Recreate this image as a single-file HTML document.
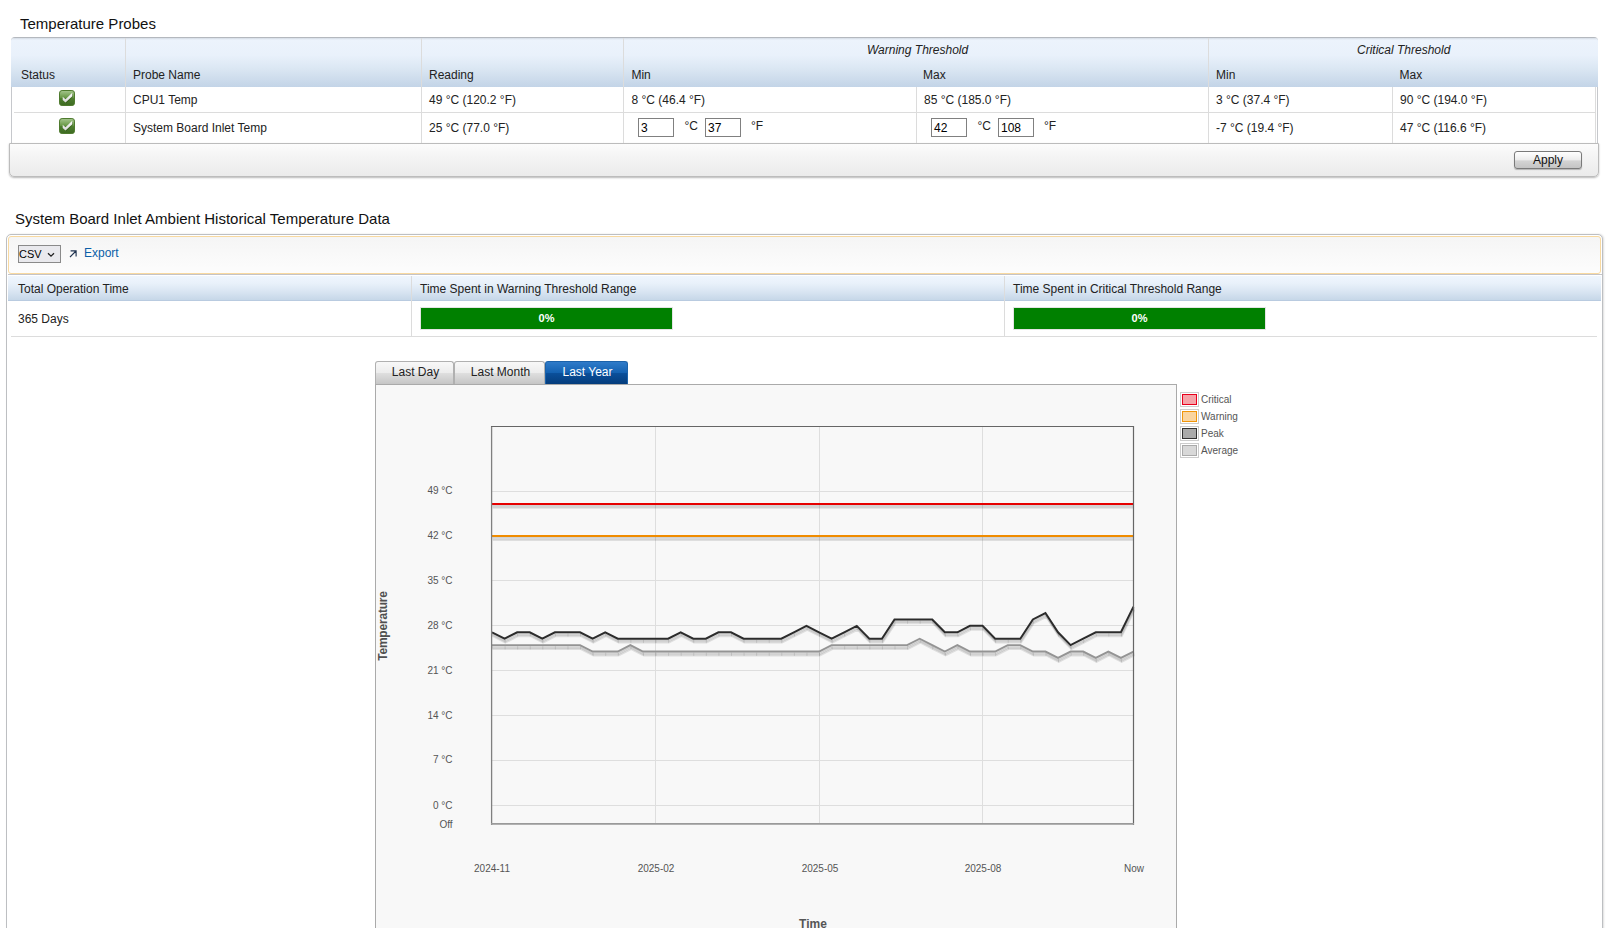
<!DOCTYPE html>
<html>
<head>
<meta charset="utf-8">
<title>Temperature Probes</title>
<style>
html,body{margin:0;padding:0;background:#fff;}
html{overflow:hidden;width:1614px;height:928px;}
body{width:1614px;height:928px;overflow:hidden;position:relative;font-family:"Liberation Sans",sans-serif;font-size:12px;color:#222;}
.abs{position:absolute;}
.t{position:absolute;white-space:nowrap;line-height:14px;font-size:12px;color:#222;}
.h1{position:absolute;white-space:nowrap;font-size:15px;line-height:18px;color:#111;}
.hdr{background:linear-gradient(#d4dbe4 0%,#ecf3fc 4%,#e9f1fb 35%,#dbe7f3 62%,#c3d4e7 100%);}
.vline{position:absolute;width:1px;background:#dcdcdc;}
.hline{position:absolute;height:1px;background:#dcdcdc;}
.inp{position:absolute;box-sizing:border-box;border:1px solid #808080;background:#fff;width:36px;height:19px;font-size:12px;line-height:17px;padding:1px 0 0 2px;color:#000;}
.chk{position:absolute;width:16px;height:16px;}
.tab{position:absolute;box-sizing:border-box;height:23px;top:361px;border:1px solid #b0b0b0;border-bottom:none;border-radius:3px 3px 0 0;background:linear-gradient(#f8f8f8 0%,#ececec 50%,#dedede 52%,#c6c6c6 100%);font-size:12px;line-height:21px;text-align:center;color:#222;padding-left:2px;}
.tab.sel{background:linear-gradient(#2f7bc9 0%,#1462b2 48%,#0a4f9a 52%,#053d7c 100%);border-color:#1b62aa;color:#fff;}
.yl{position:absolute;width:40px;text-align:right;left:412.6px;font-size:10px;line-height:12px;color:#555;white-space:nowrap;}
.xl{position:absolute;width:60px;text-align:center;font-size:10px;line-height:12px;color:#555;white-space:nowrap;top:863px;}
.lg{position:absolute;left:1201px;font-size:10px;line-height:12px;color:#555;white-space:nowrap;}
.sw{position:absolute;left:1180px;width:19px;height:15px;box-sizing:border-box;border:1px solid #ccc;padding:1px;background:#fff;}
.sw i{display:block;width:100%;height:100%;box-sizing:border-box;border:1px solid;}
</style>
</head>
<body>
<div id="p" style="position:absolute;left:0;top:0;width:1614px;height:928px;overflow:hidden;">

<!-- ===== Section 1 ===== -->
<div class="h1" style="left:20px;top:15px;">Temperature Probes</div>

<!-- table shell -->
<div class="abs" style="left:11px;top:37px;width:1587px;height:107px;border:1px solid #c6c8cc;border-top-color:#b4b8be;border-bottom:none;box-sizing:border-box;border-radius:4px 4px 0 0;background:#fff;"></div>
<div class="abs hdr" style="left:11px;top:38px;width:1587px;height:49px;border-radius:3px 3px 0 0;"></div>
<!-- footer bar -->
<div class="abs" style="left:9px;top:143px;width:1590px;height:34px;box-sizing:border-box;border:1px solid #bcbcbc;border-radius:0 0 5px 5px;background:linear-gradient(#fcfcfc 0%,#f4f4f4 40%,#ebebeb 100%);box-shadow:0 1px 2px rgba(0,0,0,.28);"></div>
<div class="abs" style="left:1514px;top:151px;width:68px;height:18px;box-sizing:border-box;border:1px solid #7a7a7a;border-radius:3px;background:linear-gradient(#ffffff 0%,#ececec 50%,#d4d4d4 55%,#c4c4c4 100%);box-shadow:0 1px 1px rgba(0,0,0,.25);font-size:12px;line-height:16px;text-align:center;color:#111;">Apply</div>

<!-- column dividers -->
<div class="vline" style="left:125px;top:38px;height:105px;"></div>
<div class="vline" style="left:421px;top:38px;height:105px;"></div>
<div class="vline" style="left:623px;top:38px;height:105px;"></div>
<div class="vline" style="left:916px;top:87px;height:56px;"></div>
<div class="vline" style="left:1208px;top:38px;height:105px;"></div>
<div class="vline" style="left:1392px;top:87px;height:56px;"></div>
<div class="vline" style="left:1595px;top:87px;height:56px;"></div>
<div class="hline" style="left:14px;top:112px;width:1582px;"></div>

<!-- header text -->
<div class="t" style="left:867px;top:43px;font-style:italic;">Warning Threshold</div>
<div class="t" style="left:1357px;top:43px;font-style:italic;">Critical Threshold</div>
<div class="t" style="left:21px;top:68px;">Status</div>
<div class="t" style="left:133px;top:68px;">Probe Name</div>
<div class="t" style="left:429px;top:68px;">Reading</div>
<div class="t" style="left:631.4px;top:68px;">Min</div>
<div class="t" style="left:923px;top:68px;">Max</div>
<div class="t" style="left:1216px;top:68px;">Min</div>
<div class="t" style="left:1399.5px;top:68px;">Max</div>

<!-- row 1 -->
<svg class="chk" style="left:59px;top:90px;" viewBox="0 0 16 16"><defs><linearGradient id="g1" x1="0" y1="0" x2="0" y2="1"><stop offset="0" stop-color="#a6c68e"/><stop offset="0.46" stop-color="#6a9a48"/><stop offset="0.54" stop-color="#4d7d2f"/><stop offset="1" stop-color="#3d6a21"/></linearGradient><linearGradient id="g2" x1="0" y1="0" x2="0" y2="1"><stop offset="0" stop-color="#fff"/><stop offset="1" stop-color="#d6d6d6"/></linearGradient></defs><rect x="0.5" y="0.5" width="15" height="15" rx="2.6" fill="url(#g1)" stroke="#4e7a2e"/><path d="M4.4 7.4 L7.2 9.9 L14 3.5 V6.9 L7.2 13.2 L4.4 10.6 Z" fill="#2c4f15" opacity="0.55"/><path d="M3.7 6.7 L6.5 9.2 L13.3 2.8 V6.2 L6.5 12.6 L3.7 9.9 Z" fill="url(#g2)"/></svg>
<div class="t" style="left:133px;top:93px;">CPU1 Temp</div>
<div class="t" style="left:429px;top:93px;">49 °C (120.2 °F)</div>
<div class="t" style="left:631.5px;top:93px;">8 °C (46.4 °F)</div>
<div class="t" style="left:924px;top:93px;">85 °C (185.0 °F)</div>
<div class="t" style="left:1216px;top:93px;">3 °C (37.4 °F)</div>
<div class="t" style="left:1400px;top:93px;">90 °C (194.0 °F)</div>

<!-- row 2 -->
<svg class="chk" style="left:59px;top:118px;" viewBox="0 0 16 16"><rect x="0.5" y="0.5" width="15" height="15" rx="2.6" fill="url(#g1)" stroke="#4e7a2e"/><path d="M4.4 7.4 L7.2 9.9 L14 3.5 V6.9 L7.2 13.2 L4.4 10.6 Z" fill="#2c4f15" opacity="0.55"/><path d="M3.7 6.7 L6.5 9.2 L13.3 2.8 V6.2 L6.5 12.6 L3.7 9.9 Z" fill="url(#g2)"/></svg>
<div class="t" style="left:133px;top:121px;">System Board Inlet Temp</div>
<div class="t" style="left:429px;top:121px;">25 °C (77.0 °F)</div>
<div class="inp" style="left:638px;top:118px;">3</div>
<div class="t" style="left:684.5px;top:119px;">°C</div>
<div class="inp" style="left:705px;top:118px;">37</div>
<div class="t" style="left:751px;top:119px;">°F</div>
<div class="inp" style="left:931px;top:118px;">42</div>
<div class="t" style="left:977.5px;top:119px;">°C</div>
<div class="inp" style="left:998px;top:118px;">108</div>
<div class="t" style="left:1044px;top:119px;">°F</div>
<div class="t" style="left:1216px;top:121px;">-7 °C (19.4 °F)</div>
<div class="t" style="left:1400px;top:121px;">47 °C (116.6 °F)</div>

<!-- ===== Section 2 ===== -->
<div class="h1" style="left:15px;top:210px;">System Board Inlet Ambient Historical Temperature Data</div>

<!-- outer container -->
<div class="abs" style="left:6px;top:234px;width:1597px;height:720px;box-sizing:border-box;border:1px solid #bdbfc2;border-radius:5px;background:#fff;box-shadow:1px 0 2px rgba(0,0,0,.13);"></div>
<!-- export bar -->
<div class="abs" style="left:8px;top:236px;width:1593px;height:38px;box-sizing:border-box;border:1px solid #f8d9a0;border-radius:3px;background:linear-gradient(#f5f5f5,#fdfdfd);"></div>
<div class="abs" style="left:18px;top:245px;width:43px;height:18px;box-sizing:border-box;border:1px solid #8a8a8a;background:#e9e9ed;font-size:11px;line-height:17px;padding-left:0;color:#000;">CSV<svg style="position:absolute;left:28px;top:6px" width="8" height="6" viewBox="0 0 8 6"><path d="M1 1.2 L4 4.2 L7 1.2" fill="none" stroke="#222" stroke-width="1.3"/></svg></div>
<svg class="abs" style="left:68px;top:249px;" width="10" height="10" viewBox="0 0 10 10"><path d="M2 8 L8 2 M2.6 1.9 H8.1 V7.4" fill="none" stroke="#1f3350" stroke-width="1.15"/></svg>
<div class="t" style="left:84px;top:246px;color:#0b5fa8;">Export</div>

<!-- stats table -->
<div class="hline" style="left:8px;top:274px;width:1594px;background:#c4c4c8;"></div>
<div class="abs hdr" style="left:8px;top:276px;width:1593px;height:25px;background:linear-gradient(#eff6fe 0%,#e9f1fa 30%,#d9e5f2 65%,#c6d7e8 100%);border-bottom:1px solid #b9cbe0;box-sizing:border-box;"></div>
<div class="vline" style="left:411px;top:276px;height:60px;"></div>
<div class="vline" style="left:1004px;top:276px;height:60px;"></div>
<div class="hline" style="left:11px;top:336px;width:1586px;"></div>
<div class="t" style="left:18px;top:282px;">Total Operation Time</div>
<div class="t" style="left:420px;top:282px;">Time Spent in Warning Threshold Range</div>
<div class="t" style="left:1013px;top:282px;">Time Spent in Critical Threshold Range</div>
<div class="t" style="left:18px;top:312px;">365 Days</div>
<div class="abs" style="left:420px;top:307px;width:253px;height:23px;box-sizing:border-box;border:1px solid #e4e4e4;background:#008000;color:#fff;font-weight:bold;font-size:11px;line-height:21px;text-align:center;">0%</div>
<div class="abs" style="left:1013px;top:307px;width:253px;height:23px;box-sizing:border-box;border:1px solid #e4e4e4;background:#008000;color:#fff;font-weight:bold;font-size:11px;line-height:21px;text-align:center;">0%</div>

<!-- tabs -->
<div class="tab" style="left:375px;width:79px;">Last Day</div>
<div class="tab" style="left:454px;width:91px;">Last Month</div>
<div class="tab sel" style="left:545px;width:83px;">Last Year</div>

<!-- chart box -->
<div class="abs" style="left:375px;top:384px;width:802px;height:560px;box-sizing:border-box;border:1px solid #aaa;background:#f8f8f8;"></div>

<!-- y labels -->
<div class="yl" style="top:485px;">49 °C</div>
<div class="yl" style="top:530px;">42 °C</div>
<div class="yl" style="top:575px;">35 °C</div>
<div class="yl" style="top:620px;">28 °C</div>
<div class="yl" style="top:665px;">21 °C</div>
<div class="yl" style="top:710px;">14 °C</div>
<div class="yl" style="top:754px;">7 °C</div>
<div class="yl" style="top:800px;">0 °C</div>
<div class="yl" style="top:819px;">Off</div>
<!-- x labels -->
<div class="xl" style="left:462px;">2024-11</div>
<div class="xl" style="left:626px;">2025-02</div>
<div class="xl" style="left:790px;">2025-05</div>
<div class="xl" style="left:953px;">2025-08</div>
<div class="xl" style="left:1104px;">Now</div>
<div class="abs" style="left:783px;top:917px;width:60px;text-align:center;font-size:12px;line-height:14px;font-weight:bold;color:#555;">Time</div>
<div class="abs" style="left:333.3px;top:618.7px;width:100px;height:14px;text-align:center;font-size:12px;line-height:14px;font-weight:bold;color:#505050;transform:rotate(-90deg);letter-spacing:-0.2px;">Temperature</div>

<!-- plot svg -->
<svg class="abs" style="left:0;top:0;" width="1614" height="928" viewBox="0 0 1614 928">
  <g stroke="#dedede" stroke-width="1" fill="none">
    <path d="M492 491.5H1133M492 536.5H1133M492 580.5H1133M492 625.5H1133M492 670.5H1133M492 715.5H1133M492 760.5H1133M492 805.5H1133"/>
    <path d="M655.5 427V824M819.5 427V824M982.5 427V824"/>
  </g>
  <!-- shadows -->
  <g fill="none" stroke-linejoin="miter" stroke-width="2" stroke="rgba(0,0,0,0.10)">
    <path d="M492.26 505.21H1133.5"/>
    <path d="M492.26 537.30H1133.5"/>
    <polyline points="492.26,633.59 504.84,640.01 517.42,633.59 530.00,633.59 542.57,640.01 555.15,633.59 567.73,633.59 580.31,633.59 592.89,640.01 605.47,633.59 618.04,640.01 630.62,640.01 643.20,640.01 655.78,640.01 668.36,640.01 680.94,633.59 693.51,640.01 706.09,640.01 718.67,633.59 731.25,633.59 743.83,640.01 756.41,640.01 768.99,640.01 781.56,640.01 794.14,633.59 806.72,627.17 819.30,633.59 831.88,640.01 844.46,633.59 857.03,627.17 869.61,640.01 882.19,640.01 894.77,620.75 907.35,620.75 919.93,620.75 932.51,620.75 945.08,633.59 957.66,633.59 970.24,627.17 982.82,627.17 995.40,640.01 1007.98,640.01 1020.55,640.01 1033.13,620.75 1045.71,614.33 1058.29,633.59 1070.87,646.42 1083.45,640.01 1096.02,633.59 1108.60,633.59 1121.18,633.59 1133.76,607.91"/>
    <polyline points="492.26,646.42 504.84,646.42 517.42,646.42 530.00,646.42 542.57,646.42 555.15,646.42 567.73,646.42 580.31,646.42 592.89,652.84 605.47,652.84 618.04,652.84 630.62,646.42 643.20,652.84 655.78,652.84 668.36,652.84 680.94,652.84 693.51,652.84 706.09,652.84 718.67,652.84 731.25,652.84 743.83,652.84 756.41,652.84 768.99,652.84 781.56,652.84 794.14,652.84 806.72,652.84 819.30,652.84 831.88,646.42 844.46,646.42 857.03,646.42 869.61,646.42 882.19,646.42 894.77,646.42 907.35,646.42 919.93,640.01 932.51,646.42 945.08,652.84 957.66,646.42 970.24,652.84 982.82,652.84 995.40,652.84 1007.98,646.42 1020.55,646.42 1033.13,652.84 1045.71,652.84 1058.29,659.26 1070.87,652.84 1083.45,652.84 1096.02,659.26 1108.60,652.84 1121.18,659.26 1133.76,652.84"/>
    <path d="M492.52 506.51H1133.5"/>
    <path d="M492.52 538.60H1133.5"/>
    <polyline points="492.52,634.89 505.10,641.31 517.68,634.89 530.26,634.89 542.83,641.31 555.41,634.89 567.99,634.89 580.57,634.89 593.15,641.31 605.73,634.89 618.30,641.31 630.88,641.31 643.46,641.31 656.04,641.31 668.62,641.31 681.20,634.89 693.77,641.31 706.35,641.31 718.93,634.89 731.51,634.89 744.09,641.31 756.67,641.31 769.25,641.31 781.82,641.31 794.40,634.89 806.98,628.47 819.56,634.89 832.14,641.31 844.72,634.89 857.29,628.47 869.87,641.31 882.45,641.31 895.03,622.05 907.61,622.05 920.19,622.05 932.77,622.05 945.34,634.89 957.92,634.89 970.50,628.47 983.08,628.47 995.66,641.31 1008.24,641.31 1020.81,641.31 1033.39,622.05 1045.97,615.63 1058.55,634.89 1071.13,647.73 1083.71,641.31 1096.28,634.89 1108.86,634.89 1121.44,634.89 1134.02,609.21"/>
    <polyline points="492.52,647.73 505.10,647.73 517.68,647.73 530.26,647.73 542.83,647.73 555.41,647.73 567.99,647.73 580.57,647.73 593.15,654.14 605.73,654.14 618.30,654.14 630.88,647.73 643.46,654.14 656.04,654.14 668.62,654.14 681.20,654.14 693.77,654.14 706.35,654.14 718.93,654.14 731.51,654.14 744.09,654.14 756.67,654.14 769.25,654.14 781.82,654.14 794.40,654.14 806.98,654.14 819.56,654.14 832.14,647.73 844.72,647.73 857.29,647.73 869.87,647.73 882.45,647.73 895.03,647.73 907.61,647.73 920.19,641.31 932.77,647.73 945.34,654.14 957.92,647.73 970.50,654.14 983.08,654.14 995.66,654.14 1008.24,647.73 1020.81,647.73 1033.39,654.14 1045.97,654.14 1058.55,660.56 1071.13,654.14 1083.71,654.14 1096.28,660.56 1108.86,654.14 1121.44,660.56 1134.02,654.14"/>
    <path d="M492.78 507.81H1133.5"/>
    <path d="M492.78 539.90H1133.5"/>
    <polyline points="492.78,636.19 505.36,642.61 517.94,636.19 530.52,636.19 543.09,642.61 555.67,636.19 568.25,636.19 580.83,636.19 593.41,642.61 605.99,636.19 618.56,642.61 631.14,642.61 643.72,642.61 656.30,642.61 668.88,642.61 681.46,636.19 694.03,642.61 706.61,642.61 719.19,636.19 731.77,636.19 744.35,642.61 756.93,642.61 769.51,642.61 782.08,642.61 794.66,636.19 807.24,629.77 819.82,636.19 832.40,642.61 844.98,636.19 857.55,629.77 870.13,642.61 882.71,642.61 895.29,623.35 907.87,623.35 920.45,623.35 933.03,623.35 945.60,636.19 958.18,636.19 970.76,629.77 983.34,629.77 995.92,642.61 1008.50,642.61 1021.07,642.61 1033.65,623.35 1046.23,616.93 1058.81,636.19 1071.39,649.02 1083.97,642.61 1096.54,636.19 1109.12,636.19 1121.70,636.19 1134.28,610.51"/>
    <polyline points="492.78,649.02 505.36,649.02 517.94,649.02 530.52,649.02 543.09,649.02 555.67,649.02 568.25,649.02 580.83,649.02 593.41,655.44 605.99,655.44 618.56,655.44 631.14,649.02 643.72,655.44 656.30,655.44 668.88,655.44 681.46,655.44 694.03,655.44 706.61,655.44 719.19,655.44 731.77,655.44 744.35,655.44 756.93,655.44 769.51,655.44 782.08,655.44 794.66,655.44 807.24,655.44 819.82,655.44 832.40,649.02 844.98,649.02 857.55,649.02 870.13,649.02 882.71,649.02 895.29,649.02 907.87,649.02 920.45,642.61 933.03,649.02 945.60,655.44 958.18,649.02 970.76,655.44 983.34,655.44 995.92,655.44 1008.50,649.02 1021.07,649.02 1033.65,655.44 1046.23,655.44 1058.81,661.86 1071.39,655.44 1083.97,655.44 1096.54,661.86 1109.12,655.44 1121.70,661.86 1134.28,655.44"/>
    <path d="M492.50 633.29v3.4M505.08 639.71v3.4M517.66 633.29v3.4M530.24 633.29v3.4M542.81 639.71v3.4M555.39 633.29v3.4M567.97 633.29v3.4M580.55 633.29v3.4M593.13 639.71v3.4M605.71 633.29v3.4M618.28 639.71v3.4M630.86 639.71v3.4M643.44 639.71v3.4M656.02 639.71v3.4M668.60 639.71v3.4M681.18 633.29v3.4M693.75 639.71v3.4M706.33 639.71v3.4M718.91 633.29v3.4M731.49 633.29v3.4M744.07 639.71v3.4M756.65 639.71v3.4M769.23 639.71v3.4M781.80 639.71v3.4M794.38 633.29v3.4M806.96 626.87v3.4M819.54 633.29v3.4M832.12 639.71v3.4M844.70 633.29v3.4M857.27 626.87v3.4M869.85 639.71v3.4M882.43 639.71v3.4M895.01 620.45v3.4M907.59 620.45v3.4M920.17 620.45v3.4M932.75 620.45v3.4M945.32 633.29v3.4M957.90 633.29v3.4M970.48 626.87v3.4M983.06 626.87v3.4M995.64 639.71v3.4M1008.22 639.71v3.4M1020.79 639.71v3.4M1033.37 620.45v3.4M1045.95 614.03v3.4M1058.53 633.29v3.4M1071.11 646.12v3.4M1083.69 639.71v3.4M1096.26 633.29v3.4M1108.84 633.29v3.4M1121.42 633.29v3.4M1134.00 607.61v3.4M492.50 646.12v3.4M505.08 646.12v3.4M517.66 646.12v3.4M530.24 646.12v3.4M542.81 646.12v3.4M555.39 646.12v3.4M567.97 646.12v3.4M580.55 646.12v3.4M593.13 652.54v3.4M605.71 652.54v3.4M618.28 652.54v3.4M630.86 646.12v3.4M643.44 652.54v3.4M656.02 652.54v3.4M668.60 652.54v3.4M681.18 652.54v3.4M693.75 652.54v3.4M706.33 652.54v3.4M718.91 652.54v3.4M731.49 652.54v3.4M744.07 652.54v3.4M756.65 652.54v3.4M769.23 652.54v3.4M781.80 652.54v3.4M794.38 652.54v3.4M806.96 652.54v3.4M819.54 652.54v3.4M832.12 646.12v3.4M844.70 646.12v3.4M857.27 646.12v3.4M869.85 646.12v3.4M882.43 646.12v3.4M895.01 646.12v3.4M907.59 646.12v3.4M920.17 639.71v3.4M932.75 646.12v3.4M945.32 652.54v3.4M957.90 646.12v3.4M970.48 652.54v3.4M983.06 652.54v3.4M995.64 652.54v3.4M1008.22 646.12v3.4M1020.79 646.12v3.4M1033.37 652.54v3.4M1045.95 652.54v3.4M1058.53 658.96v3.4M1071.11 652.54v3.4M1083.69 652.54v3.4M1096.26 658.96v3.4M1108.84 652.54v3.4M1121.42 658.96v3.4M1134.00 652.54v3.4" stroke="rgba(0,0,0,0.10)" stroke-width="1"/>
  </g>
  <g fill="none" stroke-linejoin="miter" stroke-linecap="butt">
    <path d="M492 503.91H1133.5" stroke="#e60000" stroke-width="2"/>
    <path d="M492 536.00H1133.5" stroke="#f08c00" stroke-width="2"/>
    <polyline points="492.00,645.12 504.58,645.12 517.16,645.12 529.74,645.12 542.31,645.12 554.89,645.12 567.47,645.12 580.05,645.12 592.63,651.54 605.21,651.54 617.78,651.54 630.36,645.12 642.94,651.54 655.52,651.54 668.10,651.54 680.68,651.54 693.25,651.54 705.83,651.54 718.41,651.54 730.99,651.54 743.57,651.54 756.15,651.54 768.73,651.54 781.30,651.54 793.88,651.54 806.46,651.54 819.04,651.54 831.62,645.12 844.20,645.12 856.77,645.12 869.35,645.12 881.93,645.12 894.51,645.12 907.09,645.12 919.67,638.71 932.25,645.12 944.82,651.54 957.40,645.12 969.98,651.54 982.56,651.54 995.14,651.54 1007.72,645.12 1020.29,645.12 1032.87,651.54 1045.45,651.54 1058.03,657.96 1070.61,651.54 1083.19,651.54 1095.76,657.96 1108.34,651.54 1120.92,657.96 1133.50,651.54" stroke="#949494" stroke-width="1.9"/>
    <polyline points="492.00,632.29 504.58,638.71 517.16,632.29 529.74,632.29 542.31,638.71 554.89,632.29 567.47,632.29 580.05,632.29 592.63,638.71 605.21,632.29 617.78,638.71 630.36,638.71 642.94,638.71 655.52,638.71 668.10,638.71 680.68,632.29 693.25,638.71 705.83,638.71 718.41,632.29 730.99,632.29 743.57,638.71 756.15,638.71 768.73,638.71 781.30,638.71 793.88,632.29 806.46,625.87 819.04,632.29 831.62,638.71 844.20,632.29 856.77,625.87 869.35,638.71 881.93,638.71 894.51,619.45 907.09,619.45 919.67,619.45 932.25,619.45 944.82,632.29 957.40,632.29 969.98,625.87 982.56,625.87 995.14,638.71 1007.72,638.71 1020.29,638.71 1032.87,619.45 1045.45,613.03 1058.03,632.29 1070.61,645.12 1083.19,638.71 1095.76,632.29 1108.34,632.29 1120.92,632.29 1133.50,606.61" stroke="#2c2c2c" stroke-width="2"/>
  </g>
  <!-- plot border -->
  <path d="M491.6 426V825" stroke="#808080" stroke-width="1.3"/>
  <path d="M491 426.5H1134" stroke="#666" stroke-width="1.2"/>
  <path d="M1133.5 426V825" stroke="#666" stroke-width="1.2"/>
  <path d="M491 823.9H1134" stroke="#9a9a9a" stroke-width="1.8"/>
</svg>

<!-- legend -->
<div class="sw" style="top:392px;"><i style="border-color:#e8001c;background:#f5a3a8;"></i></div>
<div class="lg" style="top:394px;">Critical</div>
<div class="sw" style="top:409px;"><i style="border-color:#f0960a;background:#fad59f;"></i></div>
<div class="lg" style="top:411px;">Warning</div>
<div class="sw" style="top:426px;"><i style="border-color:#333;background:#aaa;"></i></div>
<div class="lg" style="top:428px;">Peak</div>
<div class="sw" style="top:443px;"><i style="border-color:#aaa;background:#d8d8d8;"></i></div>
<div class="lg" style="top:445px;">Average</div>

</div>
</body>
</html>
